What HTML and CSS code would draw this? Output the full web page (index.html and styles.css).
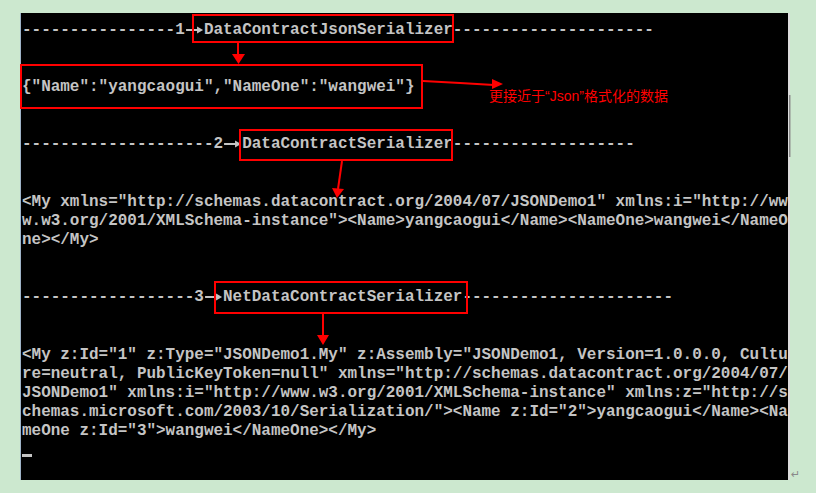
FILE: index.html
```html
<!DOCTYPE html>
<html>
<head>
<meta charset="utf-8">
<title>Console</title>
<link rel="stylesheet" href="styles.css">
</head>
<body>
<div class="page">
  <div class="console">
    <div class="ln">----------------1<span class="arr"><svg viewBox="0 0 19 10"><line x1="1" y1="6" x2="14" y2="6" stroke="#c4c4c4" stroke-width="2"/><polygon points="12,2.5 18,6 12,9.5" fill="#c4c4c4"/></svg></span>DataContractJsonSerializer---------------------</div>
    <div class="ln"> </div>
    <div class="ln"> </div>
    <div class="ln">{"Name":"yangcaogui","NameOne":"wangwei"}</div>
    <div class="ln"> </div>
    <div class="ln"> </div>
    <div class="ln">--------------------2<span class="arr"><svg viewBox="0 0 19 10"><line x1="1" y1="6" x2="14" y2="6" stroke="#c4c4c4" stroke-width="2"/><polygon points="12,2.5 18,6 12,9.5" fill="#c4c4c4"/></svg></span>DataContractSerializer-------------------</div>
    <div class="ln"> </div>
    <div class="ln"> </div>
    <div class="ln">&lt;My xmlns="http://schemas.datacontract.org/2004/07/JSONDemo1" xmlns:i="http://ww</div>
    <div class="ln">w.w3.org/2001/XMLSchema-instance"&gt;&lt;Name&gt;yangcaogui&lt;/Name&gt;&lt;NameOne&gt;wangwei&lt;/NameO</div>
    <div class="ln">ne&gt;&lt;/My&gt;</div>
    <div class="ln"> </div>
    <div class="ln"> </div>
    <div class="ln">------------------3<span class="arr"><svg viewBox="0 0 19 10"><line x1="1" y1="6" x2="14" y2="6" stroke="#c4c4c4" stroke-width="2"/><polygon points="12,2.5 18,6 12,9.5" fill="#c4c4c4"/></svg></span>NetDataContractSerializer----------------------</div>
    <div class="ln"> </div>
    <div class="ln"> </div>
    <div class="ln">&lt;My z:Id="1" z:Type="JSONDemo1.My" z:Assembly="JSONDemo1, Version=1.0.0.0, Cultu</div>
    <div class="ln">re=neutral, PublicKeyToken=null" xmlns="http://schemas.datacontract.org/2004/07/</div>
    <div class="ln">JSONDemo1" xmlns:i="http://www.w3.org/2001/XMLSchema-instance" xmlns:z="http://s</div>
    <div class="ln">chemas.microsoft.com/2003/10/Serialization/"&gt;&lt;Name z:Id="2"&gt;yangcaogui&lt;/Name&gt;&lt;Na</div>
    <div class="ln">meOne z:Id="3"&gt;wangwei&lt;/NameOne&gt;&lt;/My&gt;</div>
    <div class="ln"><span class="cursor"></span></div>
  </div>

  <svg class="marks" viewBox="0 0 816 493">
    <g fill="none" stroke="#f00" stroke-width="2">
      <rect x="193" y="15" width="260" height="27"/>
      <rect x="21" y="65" width="401" height="43"/>
      <rect x="240" y="130" width="212" height="30"/>
      <rect x="215" y="282" width="252" height="31"/>
      <line x1="238" y1="43" x2="238" y2="55"/>
      <line x1="342" y1="161" x2="338" y2="189"/>
      <line x1="323" y1="314" x2="323" y2="336"/>
      <polyline points="423,81 460,83 494,85"/>
    </g>
    <g fill="#f00">
      <polygon points="232,54 245,54 238.5,64"/>
      <polygon points="332,188 344,189 337,198"/>
      <polygon points="317,335 329,335 323,345"/>
      <polygon points="492,79 492,89 503,84"/>
    </g>
    <rect x="789" y="95" width="1.5" height="62" fill="#8c8c8c"/>
  </svg>
  <span class="note">更接近于“Json”格式化的数据</span>
  <span class="para">↵</span>
</div>
</body>
</html>
```

FILE: styles.css
```css
html, body {
  margin: 0;
  padding: 0;
}

body {
  background: #cce8cf;
  width: 816px;
  height: 493px;
  overflow: hidden;
}

.page {
  position: relative;
  width: 816px;
  height: 493px;
  padding-top: 13px;
  box-sizing: border-box;
}

.console {
  margin-left: 20px;
  width: 770px;
  height: 467px;
  box-sizing: border-box;
  background: #000;
  border-left: 1px solid #9fb4c8;
  border-right: 2px solid #dcdcdc;
  padding: 7.5px 0 0 1px;
  font-family: "Liberation Mono", monospace;
  font-size: 15.96px;
  font-weight: bold;
  color: #c4c4c4;
  overflow: hidden;
}

.ln {
  height: 19.15px;
  line-height: 19.15px;
  white-space: pre;
}

.arr {
  display: inline-block;
  width: 19.15px;
  height: 10px;
  vertical-align: baseline;
}

.arr svg {
  display: block;
  width: 19.15px;
  height: 10px;
}

.cursor {
  display: block;
  width: 9.5px;
  height: 3px;
  margin-top: 12.5px;
  background: #c4c4c4;
}

.marks {
  position: absolute;
  left: 0;
  top: 0;
  width: 816px;
  height: 493px;
  pointer-events: none;
}

.note {
  position: absolute;
  left: 489px;
  top: 86px;
  color: #f00;
  font-family: "Liberation Sans", "Noto Sans CJK SC", sans-serif;
  font-size: 14px;
  line-height: 20px;
  white-space: nowrap;
}

.para {
  position: absolute;
  left: 791px;
  top: 468px;
  font-family: "DejaVu Sans", sans-serif;
  font-size: 11px;
  line-height: 14px;
  color: #8a8a8a;
}
```
